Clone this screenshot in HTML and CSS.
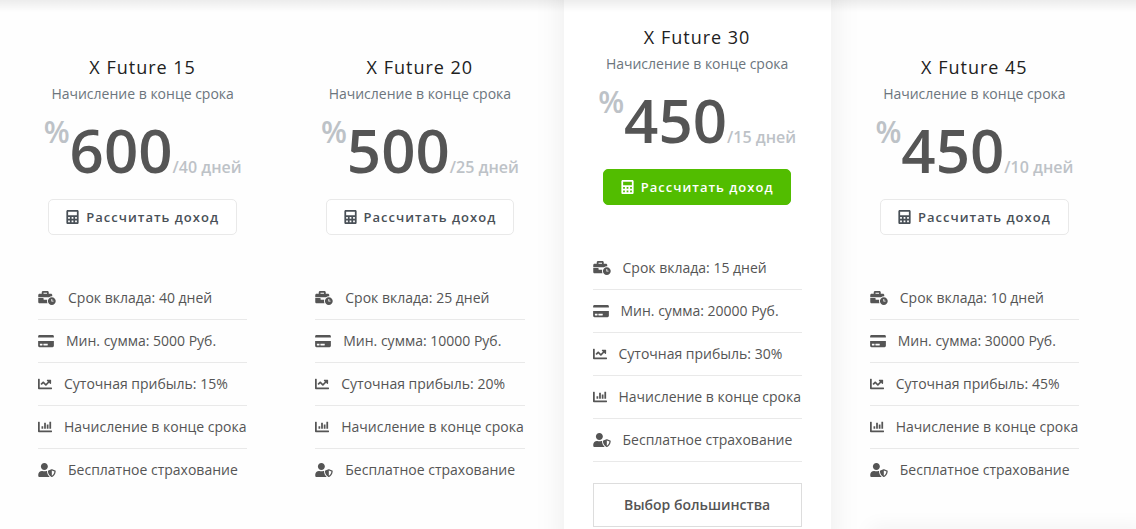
FILE: index.html
```
<!DOCTYPE html>
<html lang="ru">
<head>
<meta charset="utf-8">
<title>X Future</title>
<meta name="viewport" content="width=device-width, initial-scale=1">
<link rel="stylesheet" href="styles.css">
</head>
<body>
<svg class="sprite" aria-hidden="true">
  <symbol id="calc" viewBox="0 0 448 512"><path fill-rule="evenodd" d="M400 0H48C22 0 0 22 0 48v416c0 26 22 48 48 48h352c26 0 48-22 48-48V48c0-26-22-48-48-48zM64 64h320v128H64zM64 256h64v64H64zM192 256h64v64h-64zM320 256h64v64h-64zM64 384h64v64H64zM192 384h64v64h-64zM320 384h64v64h-64z"/></symbol>
  <symbol id="time" viewBox="0 0 640 512"><path d="M496 224c-79.59 0-144 64.41-144 144s64.41 144 144 144 144-64.41 144-144-64.41-144-144-144zm64 150.29c0 5.34-4.37 9.71-9.71 9.71h-60.57c-5.34 0-9.71-4.37-9.71-9.71v-76.57c0-5.34 4.37-9.71 9.71-9.71h12.57c5.34 0 9.71 4.37 9.71 9.71V352h38.29c5.34 0 9.71 4.37 9.71 9.71v12.58zM496 192c5.4 0 10.72.33 16 .81V144c0-25.6-22.4-48-48-48h-80V48c0-25.6-22.4-48-48-48H176c-25.6 0-48 22.4-48 48v48H48c-25.6 0-48 22.4-48 48v80h395.12c28.6-20.09 63.35-32 100.88-32zM320 96H192V64h128v32zm6.82 224H208c-8.84 0-16-7.16-16-16v-48H0v144c0 25.6 22.4 48 48 48h291.43C327.1 423.96 320 396.82 320 368c0-16.66 2.48-32.72 6.82-48z"/></symbol>
  <symbol id="card" viewBox="0 0 576 512"><path d="M0 432c0 26.5 21.5 48 48 48h480c26.5 0 48-21.5 48-48V256H0v176zm192-68c0-6.6 5.4-12 12-12h136c6.6 0 12 5.4 12 12v40c0 6.6-5.4 12-12 12H204c-6.6 0-12-5.4-12-12v-40zm-128 0c0-6.6 5.4-12 12-12h72c6.6 0 12 5.4 12 12v40c0 6.6-5.4 12-12 12H76c-6.6 0-12-5.4-12-12v-40zM576 80v48H0V80c0-26.5 21.5-48 48-48h480c26.5 0 48 21.5 48 48z"/></symbol>
  <symbol id="line" viewBox="0 0 512 512"><path d="M496 384H64V80c0-8.84-7.16-16-16-16H16C7.16 64 0 71.16 0 80v336c0 17.67 14.33 32 32 32h464c8.84 0 16-7.16 16-16v-32c0-8.84-7.16-16-16-16zM464 96H345.94c-21.38 0-32.09 25.85-16.97 40.97l32.4 32.4L288 242.75l-73.37-73.37c-12.5-12.5-32.76-12.5-45.25 0l-68.69 68.69c-6.25 6.25-6.25 16.38 0 22.63l22.62 22.62c6.25 6.25 16.38 6.25 22.63 0L192 237.25l73.37 73.37c12.5 12.5 32.76 12.5 45.25 0l96-96 32.4 32.4c15.12 15.12 40.97 4.41 40.97-16.97V112c.01-8.84-7.15-16-15.99-16z"/></symbol>
  <symbol id="bars" viewBox="0 0 512 512"><path d="M332.8 320h38.4c6.4 0 12.8-6.4 12.8-12.8V172.8c0-6.4-6.4-12.8-12.8-12.8h-38.4c-6.4 0-12.8 6.4-12.8 12.8v134.4c0 6.4 6.4 12.8 12.8 12.8zm96 0h38.4c6.4 0 12.8-6.4 12.8-12.8V76.8c0-6.4-6.4-12.8-12.8-12.8h-38.4c-6.4 0-12.8 6.4-12.8 12.8v230.4c0 6.4 6.4 12.8 12.8 12.8zm-288 0h38.4c6.4 0 12.8-6.4 12.8-12.8v-70.4c0-6.4-6.4-12.8-12.8-12.8h-38.4c-6.4 0-12.8 6.4-12.8 12.8v70.4c0 6.4 6.4 12.8 12.8 12.8zm96 0h38.4c6.4 0 12.8-6.4 12.8-12.8V108.8c0-6.4-6.4-12.8-12.8-12.8h-38.4c-6.4 0-12.8 6.4-12.8 12.8v198.4c0 6.4 6.4 12.8 12.8 12.8zM496 384H64V80c0-8.84-7.16-16-16-16H16C7.16 64 0 71.16 0 80v336c0 17.67 14.33 32 32 32h464c8.84 0 16-7.16 16-16v-32c0-8.84-7.16-16-16-16z"/></symbol>
  <symbol id="shield" viewBox="0 0 640 512"><path d="M622.3 271.1l-115.2-45c-4.1-1.6-12.6-3.7-22.2 0l-115.2 45c-10.7 4.2-17.7 14-17.7 24.9 0 111.6 68.7 188.8 132.9 213.9 9.6 3.7 18 1.6 22.2 0C558.4 489.9 640 420.5 640 296c0-10.9-7-20.7-17.7-24.9zM496 462.4V273.3l95.5 37.3c-5.6 87.1-60.9 135.4-95.5 151.8zM224 256c70.7 0 128-57.3 128-128S294.7 0 224 0 96 57.3 96 128s57.3 128 128 128zm96 40c0-2.5.8-4.8 1.1-7.2-2.5-.1-4.9-.8-7.5-.8h-16.7c-22.2 10.2-46.9 16-72.9 16s-50.6-5.8-72.9-16h-16.7C60.2 288 0 348.2 0 422.4V464c0 26.5 21.5 48 48 48h352c6.8 0 13.3-1.5 19.2-4-54-42.9-99.2-116.7-99.2-212z"/></symbol>
</svg>
<main class="plans">
  <article class="plan">
    <h2 class="name">X Future 15</h2>
    <p class="note">Начисление в конце срока</p>
    <p class="price"><span class="percent">%</span><span class="value">600</span><span class="term">/40 дней</span></p>
    <button class="calculate" type="button"><svg class="icon narrow"><use href="#calc"/></svg>Рассчитать доход</button>
    <ul class="features">
      <li><svg class="icon wide"><use href="#time"/></svg>Срок вклада: 40 дней</li>
      <li><svg class="icon medium"><use href="#card"/></svg>Мин. сумма: 5000 Руб.</li>
      <li><svg class="icon"><use href="#line"/></svg>Суточная прибыль: 15%</li>
      <li><svg class="icon"><use href="#bars"/></svg>Начисление в конце срока</li>
      <li><svg class="icon wide"><use href="#shield"/></svg>Бесплатное страхование</li>
    </ul>
  </article>
  <article class="plan">
    <h2 class="name">X Future 20</h2>
    <p class="note">Начисление в конце срока</p>
    <p class="price"><span class="percent">%</span><span class="value">500</span><span class="term">/25 дней</span></p>
    <button class="calculate" type="button"><svg class="icon narrow"><use href="#calc"/></svg>Рассчитать доход</button>
    <ul class="features">
      <li><svg class="icon wide"><use href="#time"/></svg>Срок вклада: 25 дней</li>
      <li><svg class="icon medium"><use href="#card"/></svg>Мин. сумма: 10000 Руб.</li>
      <li><svg class="icon"><use href="#line"/></svg>Суточная прибыль: 20%</li>
      <li><svg class="icon"><use href="#bars"/></svg>Начисление в конце срока</li>
      <li><svg class="icon wide"><use href="#shield"/></svg>Бесплатное страхование</li>
    </ul>
  </article>
  <article class="plan featured">
    <h2 class="name">X Future 30</h2>
    <p class="note">Начисление в конце срока</p>
    <p class="price"><span class="percent">%</span><span class="value">450</span><span class="term">/15 дней</span></p>
    <button class="calculate" type="button"><svg class="icon narrow"><use href="#calc"/></svg>Рассчитать доход</button>
    <ul class="features">
      <li><svg class="icon wide"><use href="#time"/></svg>Срок вклада: 15 дней</li>
      <li><svg class="icon medium"><use href="#card"/></svg>Мин. сумма: 20000 Руб.</li>
      <li><svg class="icon"><use href="#line"/></svg>Суточная прибыль: 30%</li>
      <li><svg class="icon"><use href="#bars"/></svg>Начисление в конце срока</li>
      <li><svg class="icon wide"><use href="#shield"/></svg>Бесплатное страхование</li>
    </ul>
    <p class="choice">Выбор большинства</p>
  </article>
  <article class="plan">
    <h2 class="name">X Future 45</h2>
    <p class="note">Начисление в конце срока</p>
    <p class="price"><span class="percent">%</span><span class="value">450</span><span class="term">/10 дней</span></p>
    <button class="calculate" type="button"><svg class="icon narrow"><use href="#calc"/></svg>Рассчитать доход</button>
    <ul class="features">
      <li><svg class="icon wide"><use href="#time"/></svg>Срок вклада: 10 дней</li>
      <li><svg class="icon medium"><use href="#card"/></svg>Мин. сумма: 30000 Руб.</li>
      <li><svg class="icon"><use href="#line"/></svg>Суточная прибыль: 45%</li>
      <li><svg class="icon"><use href="#bars"/></svg>Начисление в конце срока</li>
      <li><svg class="icon wide"><use href="#shield"/></svg>Бесплатное страхование</li>
    </ul>
  </article>
</main>
<div class="top-shade"></div>
<div class="bottom-shade"></div>
</body>
</html>
```
FILE: styles.css
```
* { box-sizing: border-box; }

body {
  margin: 0;
  background: #fefefe;
  color: #555;
  font: 400 14px/20px "Open Sans", "Noto Sans", sans-serif;
}

h2, p, ul { margin: 0; padding: 0; }

.sprite { position: absolute; width: 0; height: 0; }

.plans {
  display: grid;
  grid-template-columns: repeat(4, 1fr);
  gap: 10px;
  min-height: 100vh;
  padding: 0 28px 0 9px;
  overflow: hidden;
}

.plan {
  display: flex;
  flex-direction: column;
  align-items: center;
  padding: 55px 29px 0;
}

.featured {
  margin: -30px 0;
  background: #fff;
  box-shadow: 0 0 30px rgba(0, 0, 0, .08);
}

.name {
  color: #212121;
  font-size: 18px;
  font-weight: 400;
  line-height: 24px;
  letter-spacing: 1px;
}

.note {
  margin-top: 5px;
  color: #6c757d;
}

.price {
  display: flex;
  align-items: flex-end;
  margin-top: 14px;
  font-weight: 600;
  color: #bdc2c7;
}

.percent {
  align-self: flex-start;
  font-size: 30px;
  line-height: 28px;
}

.value {
  color: #555;
  font-size: 60px;
  line-height: 64px;
}

.term {
  font-size: 16px;
  line-height: 30px;
}

.calculate {
  display: flex;
  align-items: center;
  justify-content: center;
  gap: 7px;
  height: 36px;
  margin-top: 17px;
  padding: 0 17px;
  border: 1px solid #e9e9e9;
  border-radius: 5px;
  background: #fff;
  color: #495057;
  font: inherit;
  font-size: 13px;
  font-weight: 600;
  letter-spacing: 1px;
  white-space: nowrap;
}

.featured .calculate {
  border-color: #52bd00;
  background: #52bd00;
  color: #fff;
}

.icon {
  flex: none;
  width: 14px;
  height: 14px;
  fill: currentColor;
}

.narrow { width: 13px; }
.medium { width: 16px; }
.wide { width: 18px; }

.features {
  align-self: stretch;
  margin-top: 42px;
  list-style: none;
}

.features li {
  display: flex;
  align-items: center;
  gap: 12px;
  padding: 11px 0;
  border-bottom: 1px solid #e9e9e9;
  white-space: nowrap;
}

.plan:not(.featured) li:last-child { border-bottom: 0; }

.choice {
  align-self: stretch;
  margin: 21px 0 32px;
  padding: 11px 0;
  border: 1px solid #ddd;
  font-weight: 600;
  text-align: center;
}

.top-shade {
  position: absolute;
  top: 0;
  left: 0;
  right: 0;
  height: 12px;
  background: linear-gradient(rgba(0, 0, 0, .07), transparent);
}

.bottom-shade {
  position: fixed;
  bottom: -10px;
  left: 870px;
  right: -10px;
  height: 10px;
  box-shadow: 0 0 20px rgba(0, 0, 0, .08);
}
```
